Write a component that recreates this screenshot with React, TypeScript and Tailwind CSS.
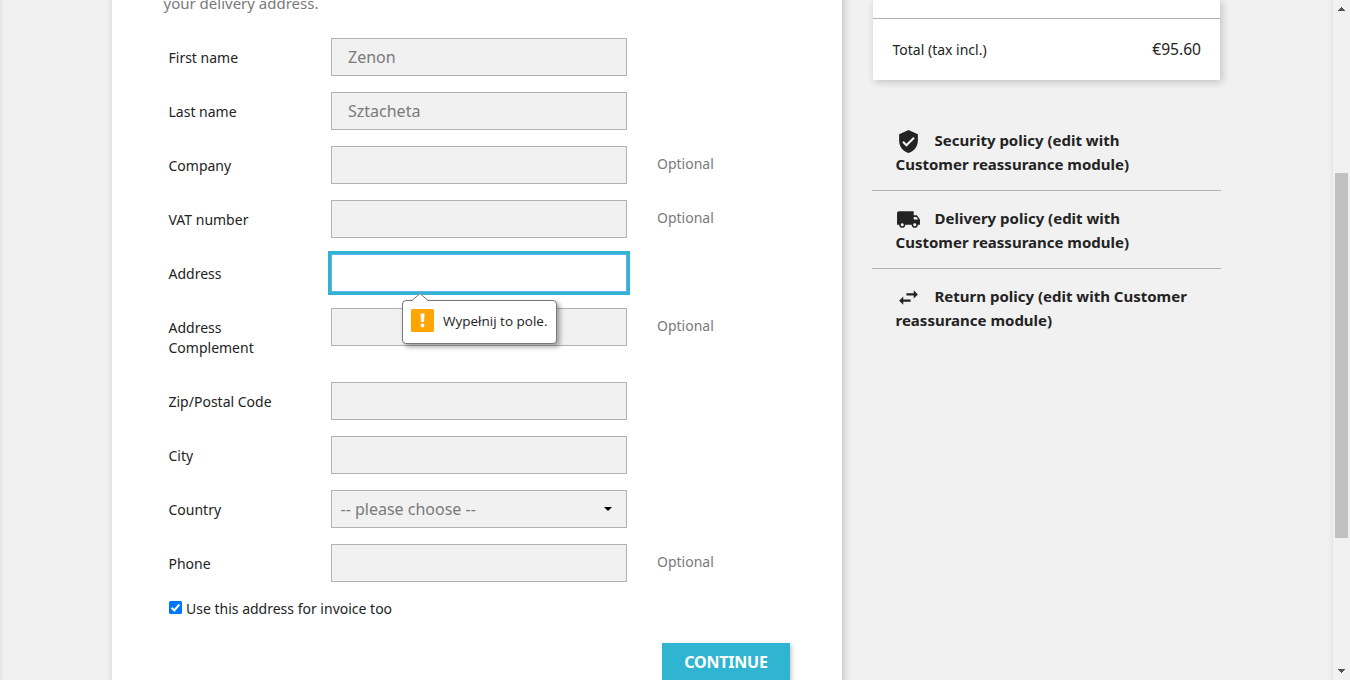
import type { ReactNode } from "react";

type FieldProps = {
  label: string;
  value?: string;
  optional?: boolean;
  focused?: boolean;
  select?: boolean;
  children?: ReactNode;
};

function Field({ label, value, optional, focused, select, children }: FieldProps) {
  const box = focused
    ? "bg-white border-[#66afe9] outline-[3px] outline-solid outline-[#2fb5d2]"
    : "bg-[#f1f1f1] border-[#b2b2b2]";
  return (
    <div className="mb-4 flex items-start">
      <div className="w-[162.5px] pt-[10px] pb-2 pr-12 text-sm leading-5">{label}</div>
      <div
        className={`relative flex h-[38px] w-[296px] items-center justify-between border text-base leading-5 text-[#7a7a7a] ${select ? "pr-[14px] pl-[8.5px]" : "px-4"} ${box}`}
      >
        <span>{value}</span>
        {select && (
          <svg width="8" height="4" viewBox="0 0 8 4" aria-hidden="true">
            <path d="M0 0h8L4 4z" fill="#000" />
          </svg>
        )}
        {children}
      </div>
      {optional && <div className="ml-[30px] pt-2 text-sm leading-5 text-[#7a7a7a]">Optional</div>}
    </div>
  );
}

function ValidationBubble() {
  return (
    <div className="absolute top-[45px] left-[70px] z-10 flex h-[44px] w-[155px] items-center rounded-[4px] border border-[#777] bg-white pl-2 text-sm whitespace-nowrap text-[#222] shadow-[3px_3px_5px_rgba(0,0,0,0.35)]">
      <svg className="absolute -top-[8px] left-[9px]" width="16" height="8" viewBox="0 0 16 8" aria-hidden="true">
        <path d="M0 8 8 .5 16 8z" fill="#fff" />
        <path d="M0 7.5 8 .5l8 7" fill="none" stroke="#777" />
      </svg>
      <svg className="mb-[3px] shrink-0" width="23" height="23" viewBox="0 0 23 23" aria-hidden="true">
        <rect width="23" height="23" rx="1.5" fill="#ffa400" />
        <path d="M9.5 4.500h4l-.5 8.500h-3z" fill="#fff" />
        <circle cx="11.5" cy="16.5" r="1.9" fill="#fff" />
      </svg>
      <span className="ml-[9px] font-['Open_Sans',sans-serif] text-[13.5px]">Wypełnij to pole.</span>
    </div>
  );
}

function Policy({ icon, children }: { icon: ReactNode; children: ReactNode }) {
  return (
    <div className="h-[78px] border-b border-[#b2b2b2] pt-[15px] pr-7 pl-[23.5px] text-[15px] leading-6 font-bold last:border-b-0">
      <span className="-my-1 mr-[14px] inline-block h-[25px] w-[25px] align-middle">{icon}</span>
      {children}
    </div>
  );
}

function Glyph({ d }: { d: string }) {
  return (
    <svg width="25" height="25" viewBox="0 0 24 24" fill="#232323" aria-hidden="true">
      <path d={d} />
    </svg>
  );
}

export default function App() {
  return (
    <div className="flex h-[680px] w-[1350px] overflow-hidden bg-[#f1f1f1] font-['Noto_Sans',sans-serif] text-[#232323]">
      <main className="-mt-2 flex h-[696px] w-[1333px] shrink-0 items-start pt-2 pl-[112px] shadow-[inset_0_2px_5px_rgba(0,0,0,0.11)]">
        <section className="-mt-2 h-[696px] w-[730px] bg-white shadow-[2px_2px_8px_rgba(0,0,0,0.2)]">
          <p className="-mt-px mb-[23px] ml-[51.5px] h-6 text-[15px] leading-6 text-[#7a7a7a]">your delivery address.</p>
          <form className="pl-[56.5px]">
            <Field label="First name" value="Zenon" />
            <Field label="Last name" value="Sztacheta" />
            <Field label="Company" optional />
            <Field label="VAT number" optional />
            <Field label="Address" focused>
              <ValidationBubble />
            </Field>
            <Field label="Address Complement" optional />
            <Field label="Zip/Postal Code" />
            <Field label="City" />
            <Field label="Country" value="-- please choose --" select />
            <Field label="Phone" optional />
            <label className="mt-[17px] flex h-5 items-center text-sm leading-5">
              <svg className="mr-1 mb-1 ml-[0.5px]" width="13" height="13" viewBox="0 0 13 13" aria-hidden="true">
                <rect width="13" height="13" rx="1.5" fill="#0075ff" />
                <path d="m2.6 6.8 2.7 2.7 5-6" fill="none" stroke="#fff" strokeWidth="2" />
              </svg>
              Use this address for invoice too
            </label>
            <div className="mt-6 mr-[52px] flex justify-end">
              <button
                type="button"
                className="h-[39px] w-[128px] bg-[#2fb5d2] pb-[2px] text-base font-bold tracking-[-0.2px] text-white uppercase shadow-[2px_2px_4px_rgba(0,0,0,0.2)]"
              >
                Continue
              </button>
            </div>
          </form>
        </section>
        <aside className="ml-[30px] w-[349px]">
          <div className="ml-px w-[347px] bg-white pt-[18px] shadow-[2px_2px_8px_rgba(0,0,0,0.2)]">
            <div className="flex h-[62px] items-center justify-between border-t border-[#b2b2b2] pr-[19px] pl-[19.5px]">
              <span className="text-sm">Total (tax incl.)</span>
              <span className="text-[15.6px]">€95.60</span>
            </div>
          </div>
          <div className="mt-[33px]">
            <Policy icon={<Glyph d="M12 1 3 5v6c0 5.55 3.84 10.74 9 12 5.16-1.26 9-6.45 9-12V5l-9-4zm-2 16-4-4 1.41-1.41L10 14.17l6.59-6.59L18 9l-8 8z" />}>
              Security policy (edit with <br />
              Customer reassurance module)
            </Policy>
            <Policy icon={<Glyph d="M20 8h-3V4H3c-1.1 0-2 .9-2 2v11h2c0 1.66 1.34 3 3 3s3-1.34 3-3h6c0 1.66 1.34 3 3 3s3-1.34 3-3h2v-5l-3-4zM6 18.5c-.83 0-1.5-.67-1.5-1.5s.67-1.5 1.5-1.5 1.5.67 1.5 1.5-.67 1.5-1.5 1.5zm13.500-9 1.96 2.500H17V9.500h2.500zm-1.500 9c-.83 0-1.500-.67-1.500-1.500s.67-1.500 1.500-1.500 1.500.67 1.500 1.500-.67 1.500-1.500 1.500z" />}>
              Delivery policy (edit with <br />
              Customer reassurance module)
            </Policy>
            <Policy icon={<Glyph d="M6.99 11 3 15l3.99 4v-3H14v-2H6.990v-3zM21 9l-3.990-4v3H10v2h7.010v3L21 9z" />}>
              Return policy (edit with Customer reassurance module)
            </Policy>
          </div>
        </aside>
      </main>
      <div className="flex w-[17px] shrink-0 flex-col items-center bg-[#f1f1f1] pt-[7px] pb-[7px]">
        <svg width="7" height="4" viewBox="0 0 7 4" shapeRendering="crispEdges" aria-hidden="true">
          <path d="M3 0h1v1h1v1h1v1h1v1H0V3h1V2h1V1h1z" fill="#505050" />
        </svg>
        <div className="mt-[162px] h-[365px] w-[13px] bg-[#c1c1c1]" />
        <svg className="mt-auto" width="7" height="4" viewBox="0 0 7 4" shapeRendering="crispEdges" aria-hidden="true">
          <path d="M0 0h7v1H6v1H5v1H4v1H3V3H2V2H1V1H0z" fill="#505050" />
        </svg>
      </div>
    </div>
  );
}
